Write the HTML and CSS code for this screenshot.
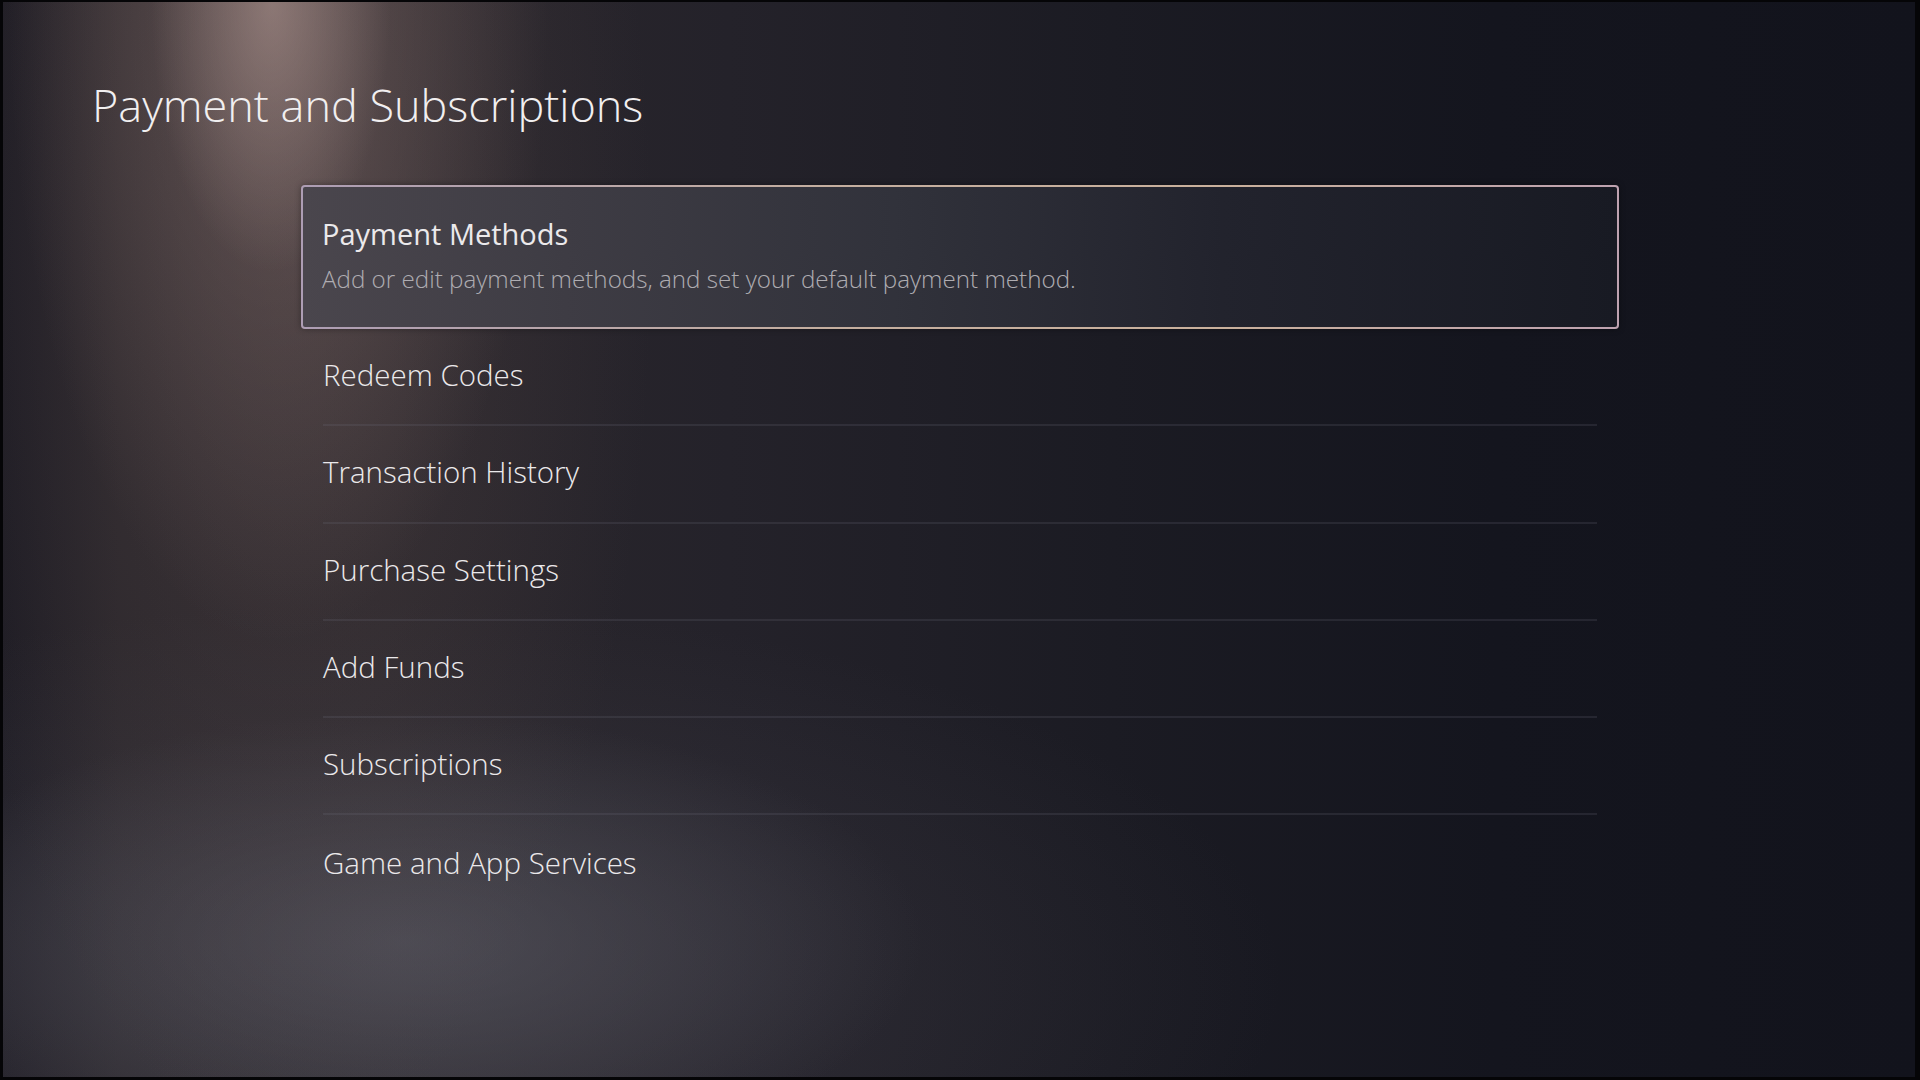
FILE: index.html
```html
<!DOCTYPE html>
<html lang="en">
<head>
<meta charset="utf-8">
<title>Payment and Subscriptions</title>
<link rel="stylesheet" href="styles.css">
</head>
<body>
<div class="screen">
  <h1 class="title">Payment and Subscriptions</h1>
  <ul class="menu">
    <li class="item selected">
      <div class="label">Payment Methods</div>
      <div class="desc">Add or edit payment methods, and set your default payment method.</div>
    </li>
    <li class="item"><div class="label">Redeem Codes</div></li>
    <li class="item"><div class="label">Transaction History</div></li>
    <li class="item"><div class="label">Purchase Settings</div></li>
    <li class="item"><div class="label">Add Funds</div></li>
    <li class="item"><div class="label">Subscriptions</div></li>
    <li class="item last"><div class="label">Game and App Services</div></li>
  </ul>
</div>
</body>
</html>
```
FILE: styles.css
```css
html, body {
  margin: 0;
  padding: 0;
  width: 1920px;
  height: 1080px;
  background: #050507;
  overflow: hidden;
}

body {
  box-sizing: border-box;
  padding: 2px 5px 3px 3px;
}

.screen {
  box-sizing: border-box;
  width: 100%;
  height: 100%;
  font-family: "Open Sans", "Noto Sans", sans-serif;
  color: #ecebed;
  padding: 73px 0 0 0;
  background:
    radial-gradient(ellipse 120px 270px at 268px 0px, rgba(175, 150, 145, 0.55), rgba(175, 150, 145, 0) 100%),
    radial-gradient(ellipse 270px 640px at 275px 0px, rgba(150, 125, 120, 0.45), rgba(150, 125, 120, 0) 100%),
    radial-gradient(ellipse 360px 900px at 290px 250px, rgba(95, 78, 78, 0.35), rgba(95, 78, 78, 0) 100%),
    radial-gradient(ellipse 520px 230px at 400px 940px, rgba(95, 95, 105, 0.55), rgba(95, 95, 105, 0) 100%),
    radial-gradient(ellipse 900px 380px at 380px 980px, rgba(70, 68, 78, 0.45), rgba(70, 68, 78, 0) 100%),
    linear-gradient(to right, #1f1d25 0%, #2a262b 6%, #2b272c 20%, #24222a 38%, #1b1b23 58%, #14151e 78%, #12131c 100%);
}

.title {
  margin: 0 0 0 89px;
  font-size: 45px;
  font-weight: 300;
  line-height: 60px;
  color: #f1eff0;
}

.menu {
  list-style: none;
  margin: 50px 0 0 298px;
  padding: 0;
  width: 1318px;
}

.item {
  box-sizing: border-box;
  height: 97.3px;
  margin: 0 22px;
  padding-bottom: 3px;
  border-bottom: 2px solid rgba(110, 110, 125, 0.2);
  display: flex;
  flex-direction: column;
  justify-content: center;
}

.item.last {
  border-bottom: none;
}

.label {
  font-size: 29.5px;
  font-weight: 300;
  line-height: 38px;
  color: #ebe9eb;
}

.item.selected {
  margin: 0;
  height: 144px;
  padding: 0 0 6px 19px;
  border: 2px solid transparent;
  border-radius: 4px;
  justify-content: center;
  background:
    linear-gradient(to right, #4a464d 0%, #3e3c44 20%, #31323b 45%, #22232d 70%, #181a23 100%) padding-box,
    linear-gradient(to right, #ad9db4, #c4ae9f 40%, #c9b09c 70%, #bea2b0) border-box;
  box-shadow: 0 0 6px rgba(0, 0, 0, 0.35);
}

.item.selected .label {
  font-weight: 400;
  font-size: 29px;
}

.desc {
  font-size: 24.2px;
  font-weight: 300;
  line-height: 30px;
  margin-top: 11px;
  color: #aeacb1;
}
```
